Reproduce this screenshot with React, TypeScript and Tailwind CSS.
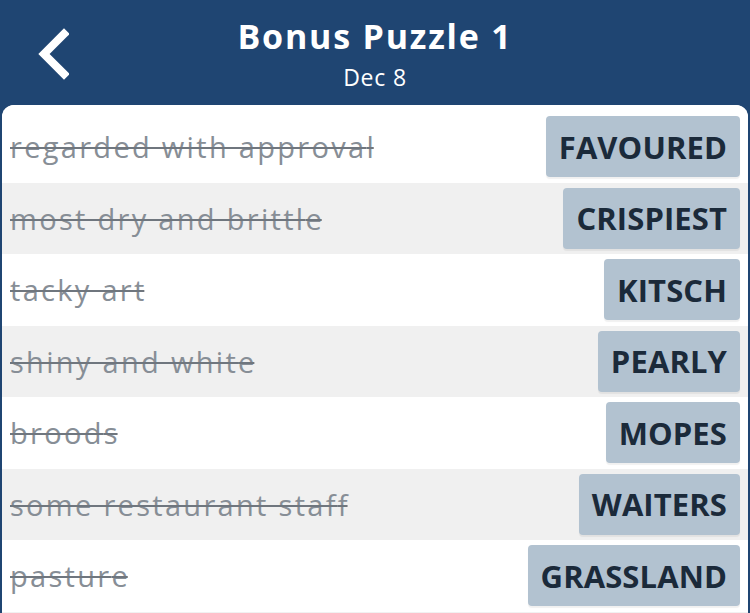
import React from "react";

const rows = [
  { clue: "regarded with approval", answer: "FAVOURED" },
  { clue: "most dry and brittle", answer: "CRISPIEST" },
  { clue: "tacky art", answer: "KITSCH" },
  { clue: "shiny and white", answer: "PEARLY" },
  { clue: "broods", answer: "MOPES" },
  { clue: "some restaurant staff", answer: "WAITERS" },
  { clue: "pasture", answer: "GRASSLAND" },
];

const App: React.FC = () => {
  return (
    <div
      className="w-[750px] h-[613px] overflow-hidden bg-[#1f4572]"
      style={{ fontFamily: "'Open Sans', 'Noto Sans', sans-serif" }}
    >
      {/* Header */}
      <header className="relative h-[105px] flex flex-col items-center text-white">
        <button className="absolute left-[32px] top-[28px] w-[40px] h-[52px] flex items-center justify-center">
          <svg width="34" height="52" viewBox="0 0 34 52" fill="none">
            <path
              d="M29 6 L9 26 L29 46"
              stroke="white"
              strokeWidth="8"
              strokeLinecap="square"
              strokeLinejoin="miter"
            />
          </svg>
        </button>
        <h1 className="mt-[13px] text-[34px] leading-[46px] font-bold tracking-[1.8px]">
          Bonus Puzzle 1
        </h1>
        <p className="mt-[4px] text-[23px] leading-[28px] tracking-[0.8px]">Dec 8</p>
      </header>

      {/* Word list */}
      <div className="mx-[2px] bg-[#f1f1f1] rounded-t-[12px] overflow-hidden h-[508px]">
        <div className="bg-white h-[6px]" />
        {rows.map((r, i) => (
          <div
            key={r.answer}
            className={`h-[71.5px] flex items-center justify-between pl-[8px] pr-[8px] ${
              i % 2 === 0 ? "bg-white" : "bg-[#f0f0f0]"
            }`}
          >
            <span className="text-[29px] tracking-[2.3px] text-[#878e96] line-through decoration-[2px] decoration-[#6f767e]">
              {r.clue.slice(0, -1)}
              <span className="tracking-normal">{r.clue.slice(-1)}</span>
            </span>
            <span className="h-[61px] flex items-center px-[13px] rounded-[4px] bg-[#b2c2d0] shadow-[0_2px_1px_rgba(0,0,0,0.06)] text-[31px] font-bold text-[#1b2a3a] tracking-[0.1px]">
              {r.answer}
            </span>
          </div>
        ))}
      </div>
    </div>
  );
};

export default App;
